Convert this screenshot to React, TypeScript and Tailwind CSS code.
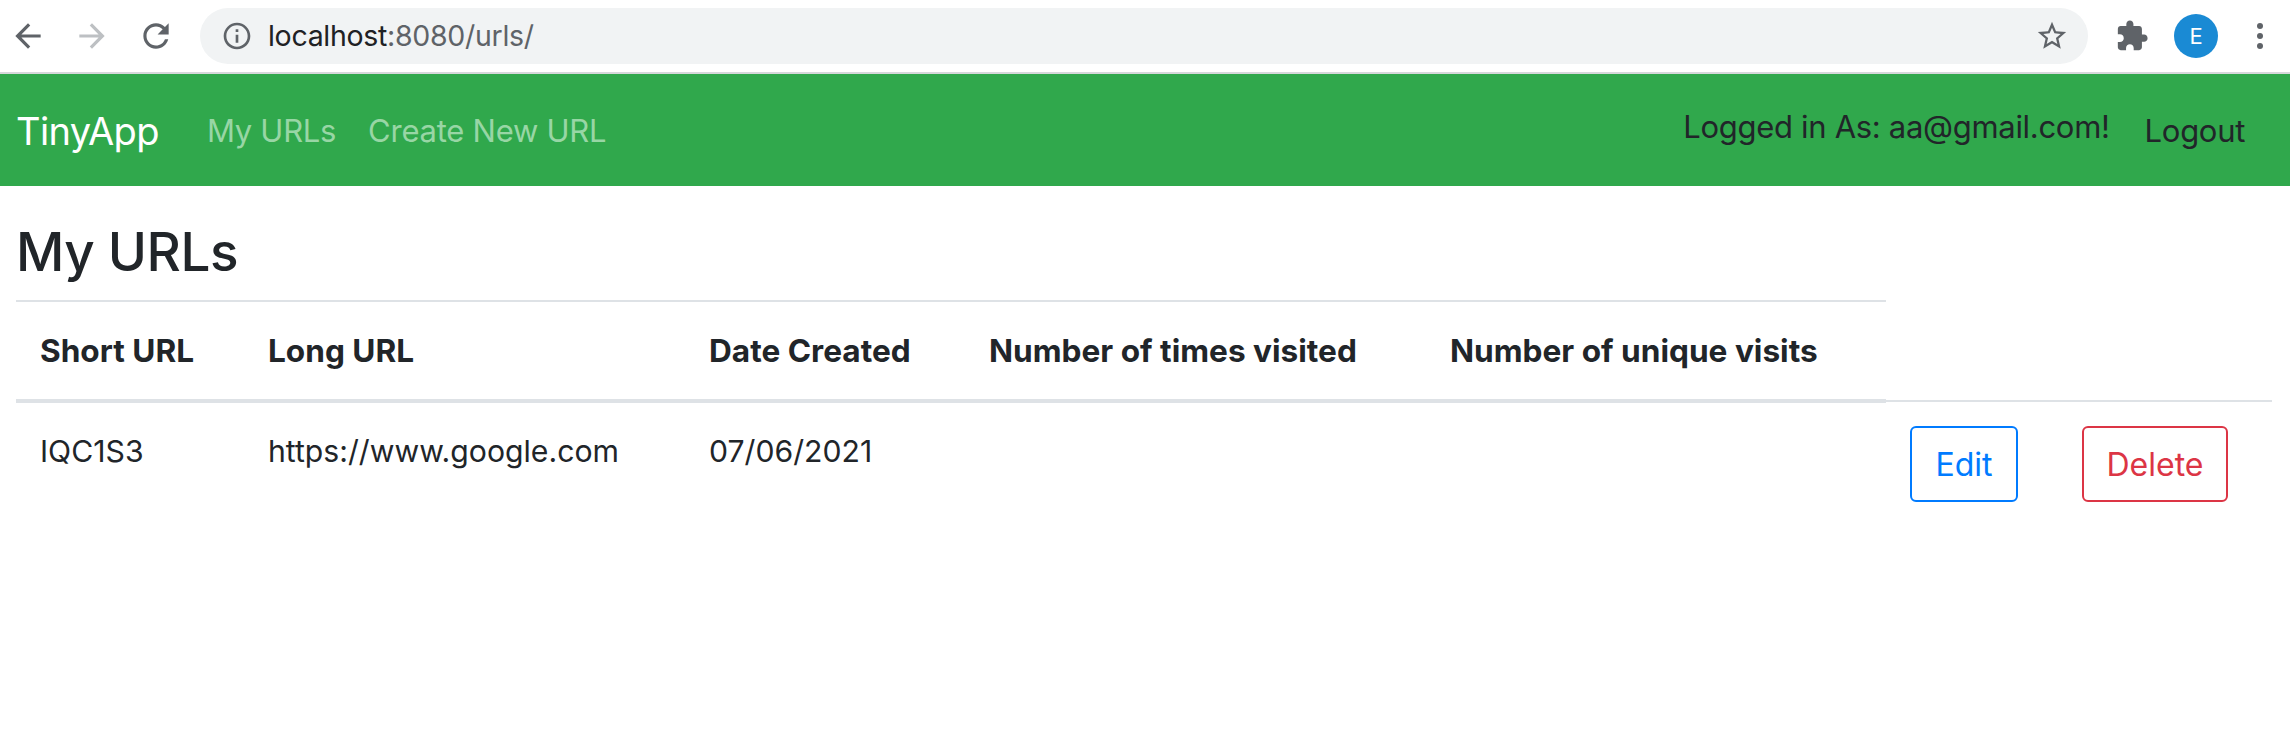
const P = {
  back: "M20 11H7.83l5.59-5.59L12 4l-8 8 8 8 1.41-1.41L7.83 13H20v-2z",
  fwd: "M4 11h12.17l-5.59-5.59L12 4l8 8-8 8-1.41-1.41L16.17 13H4v-2z",
  reload: "M17.65 6.35C16.2 4.9 14.21 4 12 4c-4.42 0-7.99 3.58-7.99 8s3.57 8 7.99 8c3.73 0 6.84-2.55 7.73-6h-2.08c-.82 2.33-3.04 4-5.65 4-3.31 0-6-2.69-6-6s2.69-6 6-6c1.66 0 3.14.69 4.22 1.78L13 11h7V4l-2.35 2.35z",
  info: "M11 7h2v2h-2zm0 4h2v6h-2zm1-9C6.48 2 2 6.48 2 12s4.48 10 10 10 10-4.48 10-10S17.52 2 12 2zm0 18c-4.41 0-8-3.59-8-8s3.59-8 8-8 8 3.59 8 8-3.59 8-8 8z",
  star: "M22 9.24l-7.19-.62L12 2 9.19 8.63 2 9.24l5.46 4.73L5.82 21 12 17.27 18.18 21l-1.63-7.03L22 9.24zM12 15.4l-3.76 2.27 1-4.28-3.32-2.88 4.38-.38L12 6.1l1.71 4.04 4.38.38-3.32 2.88 1 4.28L12 15.4z",
  ext: "M20.5 11H19V7c0-1.1-.9-2-2-2h-4V3.5C13 2.12 11.88 1 10.5 1S8 2.12 8 3.5V5H4c-1.1 0-1.99.9-1.99 2v3.8H3.5c1.49 0 2.7 1.21 2.7 2.7s-1.21 2.7-2.7 2.7H2V20c0 1.1.9 2 2 2h3.8v-1.5c0-1.49 1.21-2.7 2.7-2.7 1.49 0 2.7 1.21 2.7 2.7V22H17c1.1 0 2-.9 2-2v-4h1.5c1.38 0 2.5-1.12 2.5-2.5S21.88 11 20.5 11z",
};

function Icon({ d, className }: { d: string; className: string }) {
  return (
    <svg viewBox="0 0 24 24" className={className} fill="currentColor">
      <path d={d} />
    </svg>
  );
}

const th = "border-t-2 border-b-4 border-[#dee2e6] h-[100px] pl-6 text-left align-middle font-bold text-[31.6px] tracking-normal";
const td = "border-t-2 border-[#dee2e6] pl-6 pt-[26px]";

export default function App() {
  return (
    <div className="w-[2290px] h-[732px] bg-white overflow-hidden text-[#212529] font-['Inter','Liberation_Sans',sans-serif]">
      <div className="h-[74px] border-b-2 border-[#d6d8da] flex items-center">
        <Icon d={P.back} className="w-[38px] h-[38px] ml-[9px] text-[#5f6368]" />
        <Icon d={P.fwd} className="w-[38px] h-[38px] ml-[26px] text-[#bdc0c3]" />
        <Icon d={P.reload} className="w-[38px] h-[38px] ml-[26px] text-[#5f6368]" />
        <div className="ml-[25px] w-[1888px] h-[56px] rounded-[28px] bg-[#f1f3f4] flex items-center">
          <Icon d={P.info} className="w-[32px] h-[32px] ml-[21px] text-[#5f6368]" />
          <div className="ml-[15px] text-[28.5px] tracking-[-0.3px] text-[#5f6368]">
            <span className="text-[#202124]">localhost</span>:8080/urls/
          </div>
          <Icon d={P.star} className="w-[34px] h-[34px] ml-auto mr-[19px] text-[#5f6368]" />
        </div>
        <Icon d={P.ext} className="w-[34px] h-[34px] ml-[27px] text-[#5f6368]" />
        <div className="w-[44px] h-[44px] ml-[25px] rounded-full bg-[#1a8ad4] text-white text-[22px] flex items-center justify-center">E</div>
        <div className="ml-[39px] flex flex-col gap-[4px]">
          <div className="w-[6px] h-[6px] rounded-full bg-[#5f6368]" />
          <div className="w-[6px] h-[6px] rounded-full bg-[#5f6368]" />
          <div className="w-[6px] h-[6px] rounded-full bg-[#5f6368]" />
        </div>
      </div>

      <nav className="h-[112px] bg-[#30a84c] flex items-center pl-4 pr-[45px] pt-[2px]">
        <span className="text-[38px] tracking-[-0.6px] text-white">TinyApp</span>
        <a className="ml-[48px] text-[31px] tracking-[-0.3px] text-[#98d6a5]">My URLs</a>
        <a className="ml-[32px] text-[31px] tracking-[-0.25px] text-[#98d6a5]">Create New URL</a>
        <span className="ml-auto mb-[8px] text-[31px] tracking-[-0.3px]">Logged in As: aa@gmail.com!</span>
        <a className="ml-[35px] text-[31px] tracking-[-0.3px]">Logout</a>
      </nav>

      <div className="pl-4 pr-[18px]">
        <h1 className="h-[114px] flex items-center pt-[20px] text-[53px] font-medium tracking-[-0.5px]">My URLs</h1>
        <table className="w-full table-fixed border-collapse text-[30.2px]">
          <colgroup>
            <col className="w-[228px]" />
            <col className="w-[441px]" />
            <col className="w-[280px]" />
            <col className="w-[461px]" />
            <col className="w-[460px]" />
            <col className="w-[172px]" />
            <col />
          </colgroup>
          <thead>
            <tr>
              <th className={th}>Short URL</th>
              <th className={th}>Long URL</th>
              <th className={th}>Date Created</th>
              <th className={th}>Number of times visited</th>
              <th className={th}>Number of unique visits</th>
            </tr>
          </thead>
          <tbody>
            <tr className="align-top">
              <td className={td}>IQC1S3</td>
              <td className={td}>https://www.google.com</td>
              <td className={td}>07/06/2021</td>
              <td className="border-t-2 border-[#dee2e6]" />
              <td className="border-t-2 border-[#dee2e6]" />
              <td className="border-t-2 border-[#dee2e6] pl-6 pt-[24px]">
                <button className="w-[108px] h-[76px] pt-[2px] rounded-[6px] border-2 border-[#007bff] text-[#007bff] text-[32px]">Edit</button>
              </td>
              <td className="border-t-2 border-[#dee2e6] pl-6 pt-[24px]">
                <button className="w-[146px] h-[76px] pt-[2px] rounded-[6px] border-2 border-[#dc3545] text-[#dc3545] text-[32px]">Delete</button>
              </td>
            </tr>
          </tbody>
        </table>
      </div>
    </div>
  );
}
